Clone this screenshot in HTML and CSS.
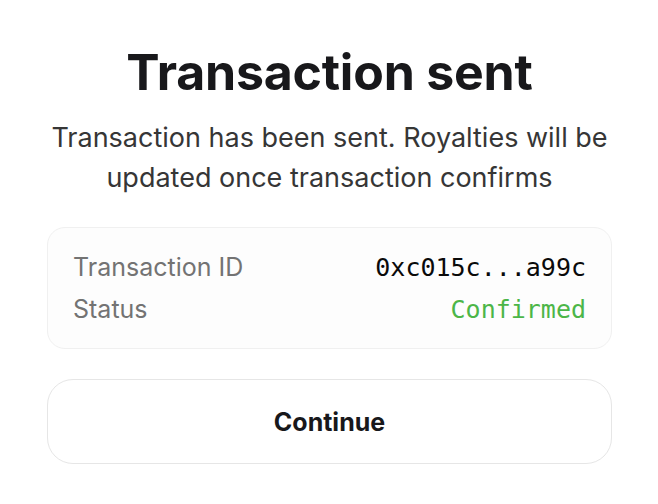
FILE: index.html
```html
<!DOCTYPE html>
<html>
<head>
<meta charset="utf-8">
<link rel="stylesheet" href="styles.css">
</head>
<body>
<main class="dialog">
  <h1 class="title">Transaction sent</h1>
  <p class="subtitle">Transaction has been sent. Royalties will be updated once transaction confirms</p>
  <section class="details">
    <div class="row">
      <span class="label">Transaction ID</span>
      <span class="value mono">0xc015c...a99c</span>
    </div>
    <div class="row">
      <span class="label">Status</span>
      <span class="value mono ok">Confirmed</span>
    </div>
  </section>
  <button class="btn">Continue</button>
</main>
</body>
</html>
```
FILE: styles.css
```css
* { box-sizing: border-box; }
html, body { margin: 0; padding: 0; background: #ffffff; }
body {
  font-family: Inter, "Noto Sans", sans-serif;
  color: #18181b;
}
.dialog {
  width: 658px;
  padding: 40px 46px 0 47px;
  display: flex;
  flex-direction: column;
  align-items: stretch;
}
.title {
  margin: 0;
  text-align: center;
  font-size: 50px;
  font-weight: 700;
  line-height: 64px;
  letter-spacing: -0.2px;
  color: #18181b;
}
.subtitle {
  margin: 14px -4px 0 -4px;
  text-align: center;
  font-size: 27px;
  line-height: 40px;
  color: #363636;
}
.details {
  margin-top: 29px;
  border: 1px solid #f0f0f0;
  border-radius: 18px;
  background: #fdfdfd;
  padding: 18px 25px 18px 25px;
  display: flex;
  flex-direction: column;
}
.row {
  display: flex;
  justify-content: space-between;
  align-items: baseline;
  line-height: 42px;
  height: 42px;
}
.label {
  font-size: 25px;
  color: #737373;
}
.mono {
  font-family: "DejaVu Sans Mono", "Liberation Mono", monospace;
  font-size: 25px;
  color: #0a0a0a;
}
.ok { color: #4cb648; }
.btn {
  margin-top: 30px;
  height: 85px;
  border: 1px solid #e6e6e6;
  border-radius: 26px;
  background: #ffffff;
  font-family: Inter, "Noto Sans", sans-serif;
  font-size: 25px;
  font-weight: 700;
  color: #18181b;
}
```
